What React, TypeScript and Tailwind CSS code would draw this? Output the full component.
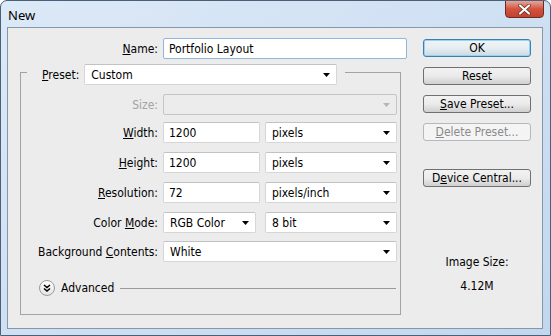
import type { ReactNode } from 'react';

const ui = { fontFamily: '"DejaVu Sans Condensed", Tahoma, "DejaVu Sans", sans-serif' };

function Arrow({ muted }: { muted?: boolean }) {
  return (
    <svg width="7" height="4" viewBox="0 0 7 4" className="shrink-0">
      <path d="M0 0h7L3.5 4z" fill={muted ? '#b5b5b5' : '#000'} />
    </svg>
  );
}

function Select({ value, width, disabled }: { value?: string; width: string; disabled?: boolean }) {
  return (
    <div
      className={`${width} h-[21px] flex items-center justify-between pl-[6px] pr-[6px] rounded-[2px] border ${
        disabled ? 'bg-[#ececec] border-[#c4c4c4]' : 'bg-white border-[#d6d6d6] border-t-[#c2c2c2]'
      }`}
    >
      <span className="text-black">{value}</span>
      <Arrow muted={disabled} />
    </div>
  );
}

function Field({ value, width, focused }: { value: string; width: string; focused?: boolean }) {
  return (
    <div
      className={`${width} h-[21px] flex items-center pl-[5px] rounded-[2px] border bg-white ${
        focused ? 'border-[#8fb6dc]' : 'border-[#d6d6d6] border-t-[#c2c2c2]'
      }`}
    >
      {value}
    </div>
  );
}

function Row({ label, muted, mt, children }: { label: ReactNode; muted?: boolean; mt: string; children: ReactNode }) {
  return (
    <div className={`flex items-center ${mt}`}>
      <div className={`w-[137px] text-right ${muted ? 'text-[#a3a3a3]' : ''}`}>{label}</div>
      <div className="ml-[5px] flex items-center">{children}</div>
    </div>
  );
}

function Btn({ children, focused, disabled, mt }: { children: ReactNode; focused?: boolean; disabled?: boolean; mt?: string }) {
  return (
    <div
      className={`w-[108px] h-[18px] flex items-center justify-center rounded-[3px] border ${mt ?? ''} ${
        disabled
          ? 'border-[#b5b9bd] bg-[#f4f4f4] text-[#8a8a8a]'
          : focused
          ? 'border-[#3c7fb1] bg-gradient-to-b from-[#f2f2f2] via-[#e6eef3] to-[#cfd8de] shadow-[inset_0_0_0_1px_#8fd6f7]'
          : 'border-[#707070] bg-gradient-to-b from-[#f2f2f2] via-[#ebebeb] to-[#cfcfcf]'
      }`}
    >
      {children}
    </div>
  );
}

export default function App() {
  return (
    <div
      className="w-[551px] h-[336px] flex flex-col rounded-t-[7px] border border-[#4a5f78] bg-gradient-to-br from-[#dce9f7] via-[#cfe0f3] to-[#c2d7ee] text-[12px] text-black overflow-hidden"
      style={ui}
    >
      {/* Title bar */}
      <div className="h-[26px] flex items-start justify-between pl-[7px] pr-[6px] shrink-0">
        <span className="mt-[5px] text-[13px] text-black" style={{ fontFamily: '"Noto Sans", "Open Sans", sans-serif' }}>
          New
        </span>
        <div className="w-[39px] h-[18px] -mt-px flex items-center justify-center rounded-b-[4px] border border-[#6b2b24] bg-gradient-to-b from-[#e7a598] via-[#d1533f] to-[#c4402c]">
          <svg width="13" height="11" viewBox="0 0 13 11">
            <path d="M2 1.5l9 8M11 1.5l-9 8" stroke="#5a2a22" strokeWidth="3.6" strokeLinecap="round" />
            <path d="M2 1.5l9 8M11 1.5l-9 8" stroke="#fff" strokeWidth="2.2" strokeLinecap="round" />
          </svg>
        </div>
      </div>

      {/* Client area */}
      <div className="ml-[6px] mr-[7px] h-[302px] border border-[#8797aa] bg-[#ececec] flex shrink-0">
        {/* Left column */}
        <div className="ml-[12px] pt-[10px] w-[387px]">
          <div className="flex items-center">
            <div className="w-[138px] text-right">
              <u>N</u>ame:
            </div>
            <div className="ml-[5px]">
              <Field value="Portfolio Layout" width="w-[244px]" focused />
            </div>
          </div>

          {/* Preset group */}
          <div className="mt-[13px] w-[381px] h-[243px] border border-[#a3a3a3]">
            <div className="-mt-[9px] ml-[6px] w-[318px] flex items-center bg-[#ececec] pl-[15px]">
              <span>
                <u>P</u>reset:
              </span>
              <div className="ml-[5px]">
                <Select value="Custom" width="w-[253px]" />
              </div>
            </div>

            <Row label="Size:" muted mt="mt-[9px]">
              <Select width="w-[234px]" disabled />
            </Row>
            <Row label={<><u>W</u>idth:</>} mt="mt-[7px]">
              <Field value="1200" width="w-[97px]" />
              <div className="ml-[5px]">
                <Select value="pixels" width="w-[132px]" />
              </div>
            </Row>
            <Row label={<><u>H</u>eight:</>} mt="mt-[9px]">
              <Field value="1200" width="w-[97px]" />
              <div className="ml-[5px]">
                <Select value="pixels" width="w-[132px]" />
              </div>
            </Row>
            <Row label={<><u>R</u>esolution:</>} mt="mt-[9px]">
              <Field value="72" width="w-[97px]" />
              <div className="ml-[5px]">
                <Select value="pixels/inch" width="w-[132px]" />
              </div>
            </Row>
            <Row label={<>Color <u>M</u>ode:</>} mt="mt-[9px]">
              <Select value="RGB Color" width="w-[93px]" />
              <div className="ml-[9px]">
                <Select value="8 bit" width="w-[132px]" />
              </div>
            </Row>
            <Row label={<>Background <u>C</u>ontents:</>} mt="mt-[8px]">
              <Select value="White" width="w-[234px]" />
            </Row>

            {/* Advanced */}
            <div className="mt-[17px] ml-[18px] mr-[4px] flex items-center">
              <div className="w-[16px] h-[16px] rounded-full border border-[#9a9a9a] bg-gradient-to-b from-white to-[#e4e4e4] flex items-center justify-center">
                <svg width="8" height="8" viewBox="0 0 8 8">
                  <path d="M1 1l3 2.5L7 1M1 4.5L4 7l3-2.5" stroke="#000" strokeWidth="1.5" fill="none" />
                </svg>
              </div>
              <span className="ml-[6px]">Advanced</span>
              <div className="ml-[6px] flex-1 h-px bg-[#9a9a9a]" />
            </div>
          </div>
        </div>

        {/* Right column */}
        <div className="ml-[16px] pt-[11px] flex flex-col">
          <Btn focused>OK</Btn>
          <Btn mt="mt-[10px]">Reset</Btn>
          <Btn mt="mt-[10px]">
            <span>
              <u>S</u>ave Preset...
            </span>
          </Btn>
          <Btn mt="mt-[10px]" disabled>
            <span>
              <u>D</u>elete Preset...
            </span>
          </Btn>
          <Btn mt="mt-[28px]">
            <span>
              D<u>e</u>vice Central...
            </span>
          </Btn>
          <div className="mt-[66px] text-center">Image Size:</div>
          <div className="mt-[6px] text-center">4.12M</div>
        </div>
      </div>
    </div>
  );
}
